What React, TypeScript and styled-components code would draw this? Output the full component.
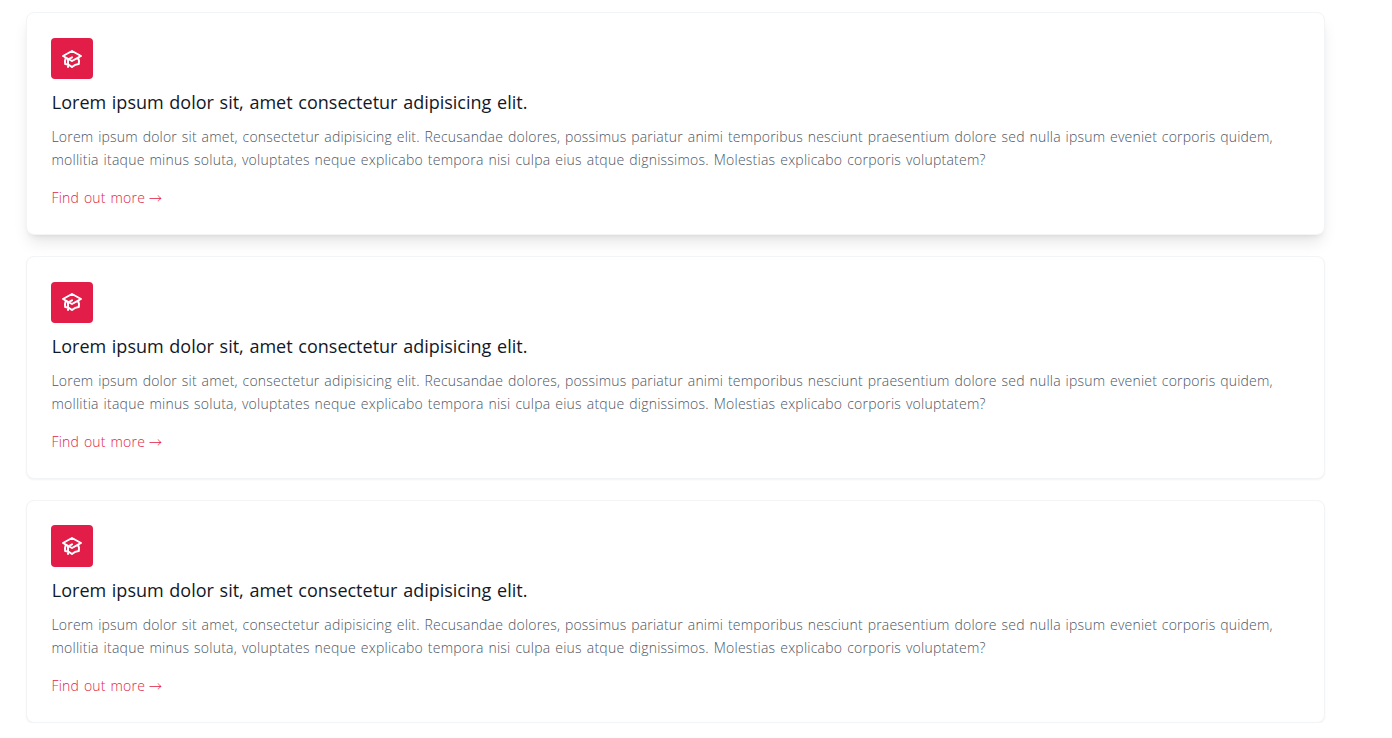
import styled, { createGlobalStyle } from 'styled-components';

const GlobalStyle = createGlobalStyle`
  * {
    box-sizing: border-box;
  }

  body {
    margin: 0;
    background-color: #fff;
    font-family: 'Open Sans', 'Noto Sans', sans-serif;
    font-weight: 300;
    word-spacing: 1px;
  }
`;

const CardList = styled.main`
  display: flex;
  flex-direction: column;
  gap: 21px;
  width: 1299px;
  margin: 12.4px 0 0 26px;
`;

const Card = styled.article<{ $raised?: boolean }>`
  height: 222.8px;
  padding: 24.4px 24px;
  border: 1px solid #f3f4f6;
  border-radius: 8px;
  background-color: #fff;
  box-shadow: ${({ $raised }) =>
    $raised
      ? '0 10px 16px -3px rgba(0, 0, 0, 0.1), 0 4px 6px -4px rgba(0, 0, 0, 0.1)'
      : '0 1px 2px 0 rgba(0, 0, 0, 0.05)'};
`;

const IconBox = styled.span`
  display: flex;
  align-items: center;
  justify-content: center;
  width: 42px;
  height: 41.6px;
  border-radius: 4px;
  background-color: #e11d48;
  color: #fff;
`;

const Title = styled.h3`
  margin: 8.6px 0 0 0.8px;
  font-size: 18px;
  font-weight: 400;
  line-height: 29px;
  white-space: nowrap;
  color: #111827;
`;

const Description = styled.p`
  margin: 8.4px 0 0 0.5px;
  font-size: 14px;
  line-height: 23px;
  white-space: nowrap;
  color: #4b5563;
`;

const Line = styled.span<{ $spacing: number }>`
  display: block;
  letter-spacing: ${({ $spacing }) => $spacing}px;
`;

const MoreLink = styled.a`
  display: inline-flex;
  gap: 4px;
  margin: 16px 0 0 0.5px;
  font-size: 14px;
  line-height: 21px;
  letter-spacing: 0.2px;
  white-space: nowrap;
  text-decoration: none;
  color: #e11d48;
`;

const Arrow = styled.span`
  font-family: 'Noto Sans CJK KR', sans-serif;
  font-size: 13px;
`;

const cards = [
  { id: 1, raised: true },
  { id: 2, raised: false },
  { id: 3, raised: false },
];

function AcademicCapIcon() {
  return (
    <svg width="24" height="24" viewBox="0 0 24 24" fill="none" stroke="currentColor">
      <path d="M12 14l9-5-9-5-9 5 9 5z" />
      <path
        strokeLinecap="round"
        strokeLinejoin="round"
        strokeWidth="2"
        d="M12 14l9-5-9-5-9 5 9 5zm0 0l6.16-3.422a12.083 12.083 0 01.665 6.479A11.952 11.952 0 0012 20.055a11.952 11.952 0 00-6.824-2.998 12.078 12.078 0 01.665-6.479L12 14zm-4 6v-7.5l4-2.222"
      />
    </svg>
  );
}

export default function App() {
  return (
    <>
      <GlobalStyle />
      <CardList>
        {cards.map((card) => (
          <Card key={card.id} $raised={card.raised}>
            <IconBox>
              <AcademicCapIcon />
            </IconBox>
            <Title>Lorem ipsum dolor sit, amet consectetur adipisicing elit.</Title>
            <Description>
              <Line $spacing={0.195}>
                Lorem ipsum dolor sit amet, consectetur adipisicing elit. Recusandae dolores, possimus pariatur animi temporibus nesciunt praesentium dolore sed nulla ipsum eveniet corporis quidem,
              </Line>
              <Line $spacing={0.237}>
                mollitia itaque minus soluta, voluptates neque explicabo tempora nisi culpa eius atque dignissimos. Molestias explicabo corporis voluptatem?
              </Line>
            </Description>
            <MoreLink href="#">
              Find out more <Arrow>→</Arrow>
            </MoreLink>
          </Card>
        ))}
      </CardList>
    </>
  );
}
